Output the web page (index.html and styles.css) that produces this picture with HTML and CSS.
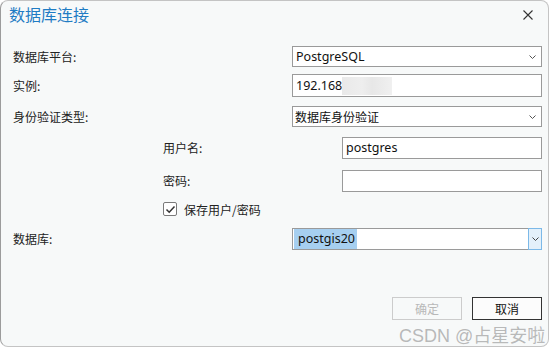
FILE: index.html
```html
<!DOCTYPE html>
<html lang="zh-CN">
<head>
    <meta charset="UTF-8">
    <meta name="viewport" content="width=device-width, initial-scale=1.0">
    <title>数据库连接</title>
    <link rel="stylesheet" href="styles.css">
</head>
<body>
    <div class="dialog">
        <div class="dialog-header">
            <span class="dialog-title">数据库连接</span>
            <span class="close-button">
                <svg width="10" height="10" viewBox="0 0 10 10">
                    <path d="M0.5 0.5 L9.5 9.5 M9.5 0.5 L0.5 9.5" stroke="#333" stroke-width="1.1" fill="none"/>
                </svg>
            </span>
        </div>

        <div class="form">
            <div class="row row-platform">
                <span class="label">数据库平台:</span>
                <div class="combo">
                    <span class="combo-text">PostgreSQL</span>
                    <svg class="chevron" width="7" height="4" viewBox="0 0 7 4">
                        <path d="M0.5 0.5 L3.5 3.5 L6.5 0.5" stroke="#555" stroke-width="1" fill="none"/>
                    </svg>
                </div>
            </div>

            <div class="row row-instance">
                <span class="label">实例:</span>
                <div class="text-input wide">
                    <span class="input-text">192.168</span><span class="blurred"></span>
                </div>
            </div>

            <div class="row row-auth">
                <span class="label">身份验证类型:</span>
                <div class="combo">
                    <span class="combo-text cjk">数据库身份验证</span>
                    <svg class="chevron" width="7" height="4" viewBox="0 0 7 4">
                        <path d="M0.5 0.5 L3.5 3.5 L6.5 0.5" stroke="#555" stroke-width="1" fill="none"/>
                    </svg>
                </div>
            </div>

            <div class="row row-user indented">
                <span class="label">用户名:</span>
                <div class="text-input narrow">
                    <span class="input-text">postgres</span>
                </div>
            </div>

            <div class="row row-password indented">
                <span class="label">密码:</span>
                <div class="text-input narrow"></div>
            </div>

            <div class="row row-save indented">
                <label class="checkbox-label">
                    <span class="checkbox">
                        <svg width="11" height="11" viewBox="0 0 11 11">
                            <path d="M1.5 5.5 L4.2 8.2 L9.5 2.5" stroke="#333" stroke-width="1.5" fill="none"/>
                        </svg>
                    </span>
                    保存用户/密码
                </label>
            </div>

            <div class="row row-database">
                <span class="label">数据库:</span>
                <div class="combo combo-editable">
                    <span class="combo-text"><span class="selected-text">postgis20</span></span>
                    <span class="drop-button">
                        <svg width="7" height="4" viewBox="0 0 7 4">
                            <path d="M0.5 0.5 L3.5 3.5 L6.5 0.5" stroke="#444" stroke-width="1" fill="none"/>
                        </svg>
                    </span>
                </div>
            </div>
        </div>

        <div class="dialog-footer">
            <button class="dialog-button" disabled>确定</button>
            <button class="dialog-button primary">取消</button>
        </div>

        <div class="watermark">CSDN @占星安啦</div>
    </div>
</body>
</html>
```

FILE: styles.css
```css
:root {
    --dialog-bg: #f7f9f9;
    --title-blue: #1f7cc4;
    --field-border: #9a9a9a;
    --label-color: #222222;
}

* {
    margin: 0;
    padding: 0;
    box-sizing: border-box;
}

body {
    font-family: "Noto Sans CJK SC", "Noto Sans", sans-serif;
    background-color: #ffffff;
    width: 550px;
    height: 350px;
    overflow: hidden;
}

.dialog {
    position: relative;
    width: 549px;
    height: 347px;
    background-color: var(--dialog-bg);
    border: 1px solid #c4c4c4;
    border-left-color: #9c9c9c;
    border-radius: 8px;
    display: flex;
    flex-direction: column;
}

.dialog-header {
    height: 45px;
    display: flex;
    justify-content: space-between;
    align-items: flex-start;
    padding: 2px 15px 0 8px;
}

.dialog-title {
    color: var(--title-blue);
    font-size: 16px;
    line-height: 22px;
}

.close-button {
    display: flex;
    margin-top: 7px;
}

.form {
    display: flex;
    flex-direction: column;
    padding: 0 6px 0 12px;
}

.row {
    display: flex;
    justify-content: space-between;
    align-items: center;
}

.row-platform { height: 21px; margin-bottom: 7px; }
.row-instance { height: 23px; margin-bottom: 9px; }
.row-auth { height: 21px; margin-bottom: 10px; }
.row-user { height: 22px; margin-bottom: 11px; }
.row-password { height: 22px; margin-bottom: 10px; }
.row-save { height: 14px; margin-bottom: 12px; }
.row-database { height: 22px; }

.indented {
    padding-left: 150px;
}

.label {
    font-size: 12px;
    color: var(--label-color);
    line-height: 16px;
}

.combo,
.text-input {
    height: 100%;
    background-color: #ffffff;
    border: 1px solid var(--field-border);
    display: flex;
    align-items: center;
}

.combo {
    width: 250px;
    justify-content: space-between;
    padding-left: 3px;
}

.combo-text,
.input-text {
    font-family: "Noto Sans", "Noto Sans CJK SC", sans-serif;
    font-size: 12.5px;
    color: #111111;
    line-height: 16px;
}

.combo-text.cjk {
    font-family: "Noto Sans CJK SC", sans-serif;
    font-size: 12px;
    margin-left: -1px;
}

.chevron {
    margin-right: 5px;
}

.text-input.wide {
    width: 250px;
    padding-left: 3px;
}

.text-input.narrow {
    width: 200px;
    padding-left: 3px;
}

.blurred {
    display: inline-block;
    width: 50px;
    height: 18px;
    background: linear-gradient(90deg, #e9e9e9 0%, #eeeeee 40%, #e7e7e7 60%, #f0f0f0 100%);
}

.checkbox-label {
    display: flex;
    align-items: center;
    font-size: 12px;
    color: #222222;
    gap: 7px;
}

.checkbox {
    width: 14px;
    height: 14px;
    border: 1px solid #7a7a7a;
    border-radius: 2px;
    background-color: #ffffff;
    display: flex;
    align-items: center;
    justify-content: center;
}

.combo-editable {
    padding-left: 1px;
    padding-right: 0;
    align-items: stretch;
}

.combo-editable .combo-text {
    display: flex;
    align-items: center;
}

.selected-text {
    background-color: #a6cff0;
    padding: 2px 2px 2px 4px;
}

.drop-button {
    width: 14px;
    margin: -1px -1px -1px 0;
    border: 1px solid #7cb9e8;
    background-color: #e3f0fa;
    display: flex;
    align-items: center;
    justify-content: center;
}

.dialog-footer {
    display: flex;
    justify-content: flex-end;
    gap: 10px;
    margin-top: 47px;
    padding-right: 6px;
}

.dialog-button {
    width: 70px;
    height: 23px;
    font-family: "Noto Sans CJK SC", sans-serif;
    font-size: 12px;
    background-color: var(--dialog-bg);
    border: 1px solid #cccccc;
    color: #b8b8b8;
}

.dialog-button.primary {
    background-color: #fcfcfc;
    border-color: #333333;
    color: #111111;
}

.watermark {
    position: absolute;
    left: 398px;
    top: 320px;
    font-family: "Liberation Sans", "Noto Sans CJK SC", sans-serif;
    font-size: 18px;
    color: rgba(130, 130, 130, 0.55);
    white-space: nowrap;
}
```
